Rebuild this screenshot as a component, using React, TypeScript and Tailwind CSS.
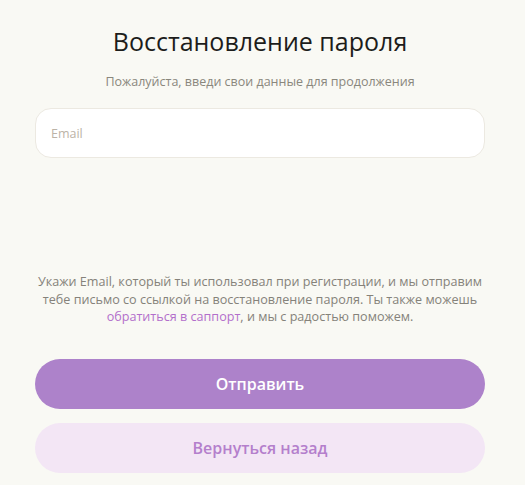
export default function App() {
  return (
    <div className="min-h-[485px] w-[525px] bg-[#f9f9f4] font-['Open_Sans',sans-serif]">
      <div className="ml-[35px] w-[450px] flex flex-col items-center pt-[23px]">
        <h1 className="text-[25px] leading-[37px] text-[#1d1d1b] font-normal">
          Восстановление пароля
        </h1>
        <p className="mt-[13px] text-[12.5px] leading-[18px] text-[#8a877d]">
          Пожалуйста, введи свои данные для продолжения
        </p>
        <input
          type="email"
          placeholder="Email"
          className="mt-[17px] w-full h-[50px] rounded-2xl border border-[#ece9e1] bg-white px-[15px] text-[12.5px] text-[#3a3a36] placeholder:text-[#bcb3a7] outline-none"
        />
        <p className="mt-[115px] text-center text-[12.6px] leading-[17.5px] text-[#85827a]">
          Укажи Email, который ты использовал при регистрации, и мы отправим
          тебе письмо со ссылкой на восстановление пароля. Ты также можешь{" "}
          <a href="#" className="text-[#b36fcb]">
            обратиться в саппорт
          </a>
          , и мы с радостью поможем.
        </p>
        <button className="mt-[33px] w-full h-[50px] rounded-full bg-[#ad82ca] text-white text-[16px] font-semibold">
          Отправить
        </button>
        <button className="mt-[14px] w-full h-[50px] rounded-full bg-[#f3e6f5] text-[#b47fcc] text-[16px] font-semibold">
          Вернуться назад
        </button>
      </div>
    </div>
  );
}
